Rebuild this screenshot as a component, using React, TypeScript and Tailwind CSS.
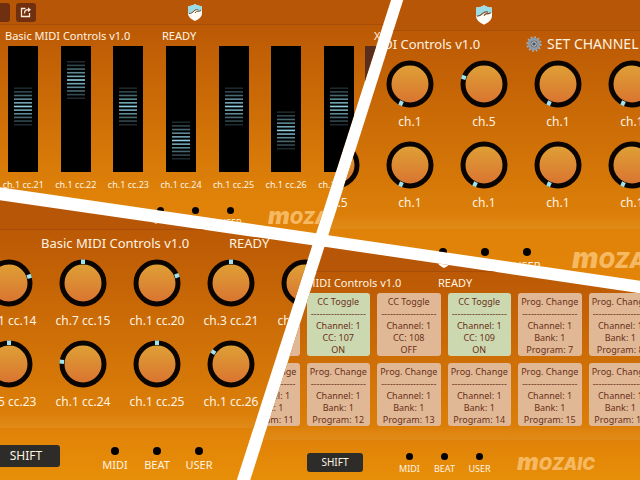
import React from "react";

type Size = "small" | "large";

function Shield({ size }: { size: Size }) {
  return (
    <svg viewBox="0 0 28 34" className={size === "small" ? "h-[17px] w-3.5" : "h-5 w-4"} aria-hidden="true">
      <path d="M14 0C10 3 5 4 0 4v14c0 8 6 12 14 16 8-4 14-8 14-16V4C23 4 18 3 14 0Z" fill="#fffdf8" />
      <path d="M14 0C10 3 5 4 0 4v15c5 0 8-1 11-4 3-3 6-4 9-3l-2 3 10-2V4C23 4 18 3 14 0Z" fill="#9adbe6" />
      <path d="M2 19c5 0 7-2 10-5 3-3 6-3 9-2M14 18c2-3 4-4 7-3l5-2" fill="none" stroke="#7a4a22" strokeWidth="2" />
    </svg>
  );
}

function Gear() {
  return (
    <svg viewBox="0 0 32 32" className="size-4" aria-hidden="true">
      <circle cx="16" cy="16" r="13.500" fill="none" stroke="#9fb0bd" strokeWidth="4" strokeDasharray="3.500 3.568" />
      <circle cx="16" cy="16" r="9.500" fill="none" stroke="#8d9ba8" strokeWidth="6" />
      <circle cx="16" cy="16" r="6.500" fill="#59636d" />
      <circle cx="16" cy="16" r="4.500" fill="none" stroke="#c3ced6" strokeWidth="2" />
      <circle cx="16" cy="16" r="2" fill="#3f4a54" />
    </svg>
  );
}

function ShareIcon() {
  return (
    <svg viewBox="0 0 12 12" className="size-3" fill="none" stroke="#fbe9dc" strokeWidth="1.300" aria-hidden="true">
      <path d="M5.500 2.500H1.500v8h8V7" />
      <path d="M4.500 7.500C4.500 5 6 3.700 8.500 3.700" />
      <path d="M8 1.200l3 2.500-3 2.500Z" fill="#fbe9dc" stroke="none" />
    </svg>
  );
}

function Header({ size, className, children }: { size: Size; className: string; children?: React.ReactNode }) {
  return (
    <header
      className={`flex shrink-0 items-center border-b border-[#a94e08] bg-[#b85608] ${
        size === "small" ? "h-[25px]" : "h-[31px]"
      } ${className}`}
    >
      {children}
      <Shield size={size} />
    </header>
  );
}

function TitleRow({ size, className, children }: { size: Size; className: string; children: React.ReactNode }) {
  return (
    <div
      className={`grid shrink-0 items-center whitespace-nowrap ${
        size === "small" ? "h-[21px] pt-px text-[11px] leading-5" : "h-[29px] pb-1 text-[13px] leading-6"
      } ${className}`}
    >
      {children}
    </div>
  );
}

function Leds({ size }: { size: Size }) {
  const small = size === "small";
  return (
    <ul className={`flex shrink-0 ${small ? "pt-[13px] text-[9px] leading-3" : "pt-[19px] text-[11px] leading-4"}`}>
      {["MIDI", "BEAT", "USER"].map((name) => (
        <li key={name} className={`flex flex-col items-center ${small ? "w-[35px] gap-[3px]" : "w-[42px] gap-0.5"}`}>
          <span className={`rounded-full bg-black ${small ? "size-[7px]" : "size-2"}`} />
          {name}
        </li>
      ))}
    </ul>
  );
}

function Logo({ size }: { size: Size }) {
  return (
    <span
      className={`block shrink-0 font-[Inter,sans-serif] font-black italic text-[#f6b860] first-letter:lowercase ${
        size === "small"
          ? "pt-3 pl-5 text-[17px] leading-5 first-letter:text-[23px]"
          : "pt-[17px] pl-6 text-[21px] leading-6 first-letter:text-[28px]"
      }`}
    >
      MOZAIC
    </span>
  );
}

function Footer({ size, className, shift }: { size: Size; className: string; shift?: string }) {
  return (
    <footer className={`flex grow items-start bg-linear-to-b from-[#e08208] to-[#e88f08] ${className}`}>
      {shift && (
        <button type="button" className={`shrink-0 rounded-[3px] bg-[#2e2c29] text-center ${shift}`}>
          SHIFT
        </button>
      )}
      <Leds size={size} />
      <Logo size={size} />
    </footer>
  );
}

function Seam() {
  return <div className="h-3.5 shrink-0 bg-linear-to-b from-[#e08a1a]/0 to-[#e18a18]" />;
}

const stripes = [0.2, 0.35, 0.5, 0.65, 0.8, 1, 0.8, 0.65, 0.5, 0.35, 0.2];

function Fader({ label, value }: { label: string; value: number }) {
  return (
    <label className="flex flex-col items-center">
      <span className="grid h-[126px] w-[30px] bg-black">
        <svg viewBox="0 0 30 126" className="col-start-1 row-start-1 h-full w-full" aria-hidden="true">
          {stripes.map((opacity, i) => (
            <rect
              key={i}
              x="6"
              y={(100 - value) * 1.26 + (i - 5) * 3.65 - 0.8}
              width="18"
              height="1.600"
              fill="#8fcfe2"
              opacity={opacity}
            />
          ))}
        </svg>
        <input type="range" defaultValue={value} className="col-start-1 row-start-1 h-full w-full opacity-0" />
      </span>
      <span className="mt-1.5 text-[9px] leading-3.5 whitespace-nowrap">{label}</span>
    </label>
  );
}

function Knob({ label, angle }: { label: string; angle: number }) {
  return (
    <label className="flex flex-col items-center">
      <span className="grid size-12">
        <svg viewBox="0 0 48 48" className="col-start-1 row-start-1 h-full w-full" aria-hidden="true">
          <defs>
            <linearGradient id="knob-face" x1="0" y1="0" x2="0" y2="1">
              <stop offset="0" stopColor="#dfa236" />
              <stop offset="1" stopColor="#d97230" />
            </linearGradient>
          </defs>
          <circle cx="24" cy="24" r="21" fill="url(#knob-face)" stroke="#0b0502" strokeWidth="5" />
          <rect x="22" y="0.500" width="4" height="4.500" fill="#9fe3ee" transform={`rotate(${angle} 24 24)`} />
        </svg>
        <input type="range" defaultValue={50} className="col-start-1 row-start-1 h-full w-full opacity-0" />
      </span>
      <span className="mt-1.5 text-xs leading-4 whitespace-nowrap">{label}</span>
    </label>
  );
}

function KnobGrid({ className, knobs }: { className: string; knobs: ({ label: string; angle: number } | null)[] }) {
  return (
    <div className={`grid w-[370px] shrink-0 grid-cols-5 gap-y-[11px] pb-1 ${className}`}>
      {knobs.map((knob, i) => (knob ? <Knob key={i} {...knob} /> : <span key={i} />))}
    </div>
  );
}

function Pad({ title, lines, on }: { title: string; lines: string[]; on?: boolean }) {
  return (
    <button
      type="button"
      className={`flex h-[63px] flex-col items-center justify-center rounded-[3px] pt-0.5 text-[9px] leading-3 whitespace-nowrap text-[#6b3018] ${
        on ? "bg-[#ccd8b0]" : "bg-[#e0b896]"
      }`}
    >
      <span>{title}</span>
      <span>-------------------</span>
      {lines.map((line) => (
        <span key={line}>{line}</span>
      ))}
    </button>
  );
}

const faders = [
  { label: "ch.1 cc.21", value: 52 },
  { label: "ch.1 cc.22", value: 73 },
  { label: "ch.1 cc.23", value: 52 },
  { label: "ch.1 cc.24", value: 25 },
  { label: "ch.1 cc.25", value: 52 },
  { label: "ch.1 cc.26", value: 33 },
  { label: "ch.1 cc.27", value: 52 },
];

const channelKnobs = [
  null,
  { label: "ch.1", angle: 205 },
  { label: "ch.5", angle: -72 },
  { label: "ch.1", angle: 205 },
  { label: "ch.1", angle: 205 },
  { label: "ch.5", angle: 205 },
  { label: "ch.1", angle: 205 },
  { label: "ch.1", angle: 205 },
  { label: "ch.1", angle: 205 },
  { label: "ch.1", angle: 205 },
];

const ccKnobs = [
  { label: "ch.1 cc.14", angle: 72 },
  { label: "ch.7 cc.15", angle: 0 },
  { label: "ch.1 cc.20", angle: 70 },
  { label: "ch.3 cc.21", angle: 0 },
  { label: "ch.1 cc.22", angle: 90 },
  { label: "ch.5 cc.23", angle: 0 },
  { label: "ch.1 cc.24", angle: -84 },
  { label: "ch.1 cc.25", angle: 0 },
  { label: "ch.1 cc.26", angle: -56 },
];

const program = (n: number) => ({ title: "Prog. Change", lines: ["Channel: 1", "Bank: 1", `Program: ${n}`] });
const toggle = (cc: number, on: boolean) => ({
  title: "CC Toggle",
  lines: ["Channel: 1", `CC: ${cc}`, on ? "ON" : "OFF"],
  on,
});

const pads = [
  program(6),
  toggle(107, true),
  toggle(108, false),
  toggle(109, true),
  program(7),
  program(8),
  program(11),
  program(12),
  program(13),
  program(14),
  program(15),
  program(16),
];

const panel = "col-start-1 row-start-1 flex min-w-0 flex-col overflow-hidden";
const body = "flex shrink-0 flex-col bg-linear-to-b from-[#bb5905] to-[#de8209]";

export default function App() {
  return (
    <main className="grid min-h-screen grid-cols-1 overflow-hidden bg-white font-['Noto_Sans','Open_Sans',sans-serif] text-[#fff3e2]">
      <section className={`${panel} [clip-path:polygon(0_0,61.1%_0,49.4%_48.6%,0_39%)]`}>
        <Header size="small" className="pr-4">
          <button type="button" aria-label="Back" className="mr-1.5 h-[19px] w-2.5 rounded-r-[3px] bg-[#70300f]" />
          <button
            type="button"
            aria-label="Share"
            className="mr-[152px] flex h-[19px] w-5 items-center justify-center rounded-[3px] bg-[#70300f]"
          >
            <ShareIcon />
          </button>
        </Header>
        <div className={body}>
          <TitleRow size="small" className="grid-cols-[157px_212px_auto] pl-[5px]">
            <h2>Basic MIDI Controls v1.0</h2>
            <span>READY</span>
            <span>X</span>
          </TitleRow>
          <div className="flex">
            <div className="-ml-[3px] grid w-[368px] shrink-0 grid-cols-7">
              {faders.map((fader) => (
                <Fader key={fader.label} {...fader} />
              ))}
            </div>
            <div className="h-[126px] w-32 bg-[#5a2e1c]" />
          </div>
          <div className="h-0.5" />
        </div>
        <Footer size="small" className="pl-[143px]" />
      </section>

      <section className={`${panel} [clip-path:polygon(63%_0,100%_0,100%_58.5%,51.3%_49%)]`}>
        <Header size="large" className="pl-[476px]" />
        <div className={body}>
          <TitleRow size="large" className="grid-cols-[194px_auto] pl-[332px]">
            <h2>Basic MIDI Controls v1.0</h2>
            <span className="flex items-center gap-[5px] text-sm leading-6">
              <Gear />
              SET CHANNEL
            </span>
          </TitleRow>
          <KnobGrid className="ml-[299px]" knobs={channelKnobs} />
          <Seam />
        </div>
        <Footer size="large" className="pl-[422px]" />
      </section>

      <section className={`${panel} pt-[199px] [clip-path:polygon(0_41.7%,48.8%_51.1%,37%_100%,0_100%)]`}>
        <Header size="large" className="pl-[148px]" />
        <div className={body}>
          <TitleRow size="large" className="grid-cols-[188px_auto] pl-[41px]">
            <h2>Basic MIDI Controls v1.0</h2>
            <span>READY</span>
          </TitleRow>
          <KnobGrid className="-ml-7" knobs={ccKnobs} />
          <Seam />
        </div>
        <Footer size="large" className="" shift="mt-[17px] -ml-2 mr-[34px] h-[22px] w-[68px] text-xs" />
      </section>

      <section className={`${panel} pt-[247px] [clip-path:polygon(50.7%_51.4%,100%_61.1%,100%_100%,39.1%_100%)]`}>
        <Header size="small" className="pl-[437px]" />
        <div className={body}>
          <TitleRow size="small" className="grid-cols-[162px_auto] pl-[276px]">
            <h2>Basic MIDI Controls v1.0</h2>
            <span>READY</span>
          </TitleRow>
          <div className="ml-[236px] grid w-[416px] grid-cols-6 gap-[7px]">
            {pads.map((pad, i) => (
              <Pad key={i} {...pad} />
            ))}
          </div>
          <Seam />
        </div>
        <Footer size="small" className="pl-[307px]" shift="mt-[13px] mr-[29px] h-[19px] w-14 text-[10px]" />
      </section>
    </main>
  );
}
